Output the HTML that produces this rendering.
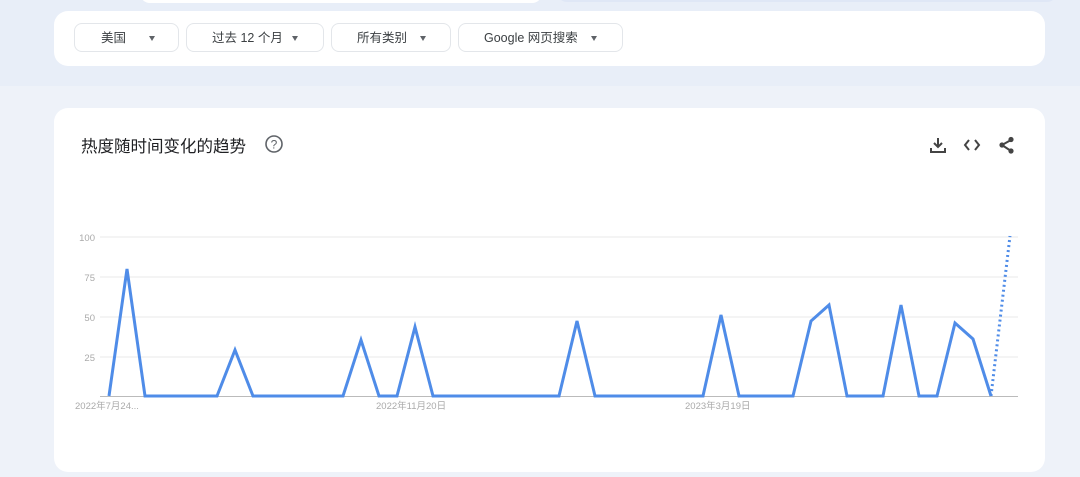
<!DOCTYPE html>
<html><head><meta charset="utf-8"><style>
body{margin:0;width:1080px;height:477px;overflow:hidden;background:#eef2f9;font-family:"Liberation Sans","Noto Sans CJK SC",sans-serif;position:relative}
.top{position:absolute;left:0;top:0;width:1080px;height:86px;background:#e8eef8}
.card{position:absolute;background:#fff;border-radius:14px}
.btn{position:absolute;top:23px;height:29px;border:1px solid #e3e6ea;border-radius:8px;font-size:12.5px;color:#3c4043;line-height:29px;box-sizing:border-box}
.btn span{position:absolute;top:0}
.btn i{position:absolute;top:12px;width:0;height:0;border-left:3.5px solid transparent;border-right:3.5px solid transparent;border-top:5px solid #5f6368}
</style></head><body>
<div class="top"></div>
<div class="card" style="left:140px;top:-20px;width:402px;height:23px;border-radius:10px"></div>
<div class="card" style="left:557px;top:-20px;width:500px;height:22px;background:#dfe7f6;border-radius:10px"></div>
<div class="card" style="left:54px;top:11px;width:991px;height:55px"></div>
<div class="btn" style="left:74px;width:105px"><span style="left:26px">美国</span><i style="left:74px"></i></div>
<div class="btn" style="left:186px;width:138px"><span style="left:25px">过去 12 个月</span><i style="left:105px"></i></div>
<div class="btn" style="left:331px;width:120px"><span style="left:25px">所有类别</span><i style="left:88px"></i></div>
<div class="btn" style="left:458px;width:165px"><span style="left:25px">Google 网页搜索</span><i style="left:132px"></i></div>
<div class="card" style="left:54px;top:108px;width:991px;height:364px"></div>
<div style="position:absolute;left:81px;top:133px;font-size:16.5px;color:#202124">热度随时间变化的趋势</div>
<svg style="position:absolute;left:264px;top:134px" width="20" height="20" viewBox="0 0 20 20"><circle cx="10" cy="10" r="8" fill="none" stroke="#5f6368" stroke-width="1.6"/><text x="10" y="14.5" font-size="12" text-anchor="middle" fill="#5f6368" font-family="Liberation Sans">?</text></svg>
<svg style="position:absolute;left:928px;top:135px" width="90" height="20" viewBox="0 0 90 20">
<g fill="none" stroke="#444" stroke-width="2"><path d="M10 3v9M6 8l4 4 4-4M3 13v4h14v-4"/><path d="M41 5l-4 5 4 5M47 5l4 5-4 5"/><path d="M74 10l9-5M74 10l9 6"/></g>
<g fill="#444"><circle cx="74" cy="10" r="2.6"/><circle cx="83" cy="4.5" r="2.6"/><circle cx="83" cy="16" r="2.6"/></g></svg>
<svg style="position:absolute;left:0;top:0" width="1080" height="477">
<g stroke="#e8e8e8" stroke-width="1"><line x1="100" y1="237" x2="1018" y2="237"/><line x1="100" y1="277" x2="1018" y2="277"/><line x1="100" y1="317" x2="1018" y2="317"/><line x1="100" y1="357" x2="1018" y2="357"/></g>
<line x1="100" y1="396.5" x2="1018" y2="396.5" stroke="#bbb" stroke-width="1"/>
<g font-size="9.5" fill="#aaa" font-family="Liberation Sans,Noto Sans CJK SC,sans-serif"><text x="95" y="241" text-anchor="end">100</text><text x="95" y="281" text-anchor="end">75</text><text x="95" y="321" text-anchor="end">50</text><text x="95" y="361" text-anchor="end">25</text>
<text x="75" y="409">2022年7月24...</text><text x="376" y="409">2022年11月20日</text><text x="685" y="409">2023年3月19日</text></g>
<polyline fill="none" stroke="#4f8ce8" stroke-width="3" stroke-linejoin="miter" points="109,396 127,269 145,396 217,396 235,350 253,396 343,396 361,340 379,396 397,396 415,327 433,396 559,396 577,321 595,396 703,396 721,315 739,396 793,396 811,321 829,305 847,396 883,396 901,305 919,396 937,396 955,323 973,339 991,396"/>
<line x1="991" y1="396" x2="1010" y2="236" stroke="#4f8ce8" stroke-width="3" stroke-dasharray="2 3"/>
</svg>
</body></html>
